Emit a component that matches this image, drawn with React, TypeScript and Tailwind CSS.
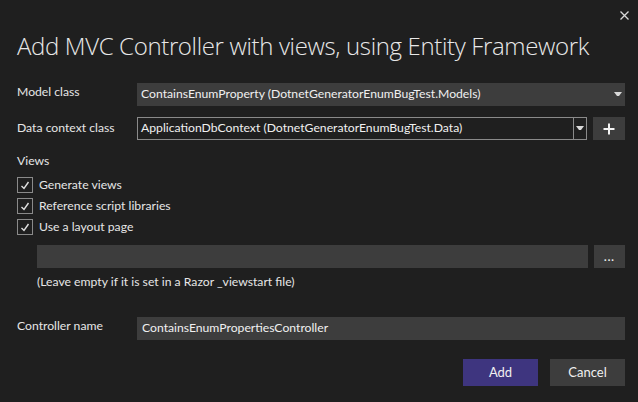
import React from "react";

const font = { fontFamily: 'Lato, "Open Sans", sans-serif' };
const titleFont = { fontFamily: '"Open Sans", "Noto Sans", sans-serif' };

function Arrow() {
  return (
    <svg width="8" height="5" viewBox="0 0 8 5" className="block">
      <polygon points="0,0 8,0 5,4 3,4" fill="#d8d8d8" />
    </svg>
  );
}

function Check({ label }: { label: string }) {
  return (
    <div className="flex items-center h-[16px] mb-[5px]">
      <div className="w-[16px] h-[16px] border border-[#8a8a8a] flex items-center justify-center">
        <svg width="10" height="9" viewBox="0 0 10 9">
          <polyline points="1.5,5 4,7.5 8.5,1" fill="none" stroke="#e0e0e0" strokeWidth="1.4" />
        </svg>
      </div>
      <span className="ml-[6px] text-[12.2px] text-[#e6e6e6] leading-none">{label}</span>
    </div>
  );
}

export default function App() {
  return (
    <div className="w-[638px] h-[402px] bg-[#1f1f1f] overflow-hidden flex flex-col pl-[17px] pr-[13px]" style={font}>
      <div className="h-[30px] flex justify-end items-center">
        <svg width="9" height="9" viewBox="0 0 9 9" className="mr-[-4px]">
          <path d="M0.5 0.5 L8.5 8.5 M8.5 0.5 L0.5 8.5" stroke="#d8d8d8" strokeWidth="1.3" />
        </svg>
      </div>
      <div className="h-[32px] flex items-center text-[24px] font-light text-[#e8e8e8] leading-none tracking-[-0.35px]" style={titleFont}>
        Add MVC Controller with views, using Entity Framework
      </div>
      <div className="mt-[21px] flex items-center h-[23px]">
        <div className="w-[120px] text-[12.2px] text-[#e6e6e6] mt-[-5px]">Model class</div>
        <div className="flex-1 h-[23px] bg-[#3d3d3d] flex items-center pl-[4px] pr-[3px]">
          <span className="flex-1 text-[12.2px] text-[#f0f0f0] leading-none">ContainsEnumProperty (DotnetGeneratorEnumBugTest.Models)</span>
          <Arrow />
        </div>
      </div>
      <div className="mt-[11px] flex items-center h-[23px]">
        <div className="w-[120px] text-[12.2px] text-[#e6e6e6]">Data context class</div>
        <div className="flex-1 h-[23px] border border-[#8a8a8a] flex items-stretch">
          <span className="flex-1 flex items-center pl-[3px] text-[12.2px] text-[#f0f0f0] leading-none">ApplicationDbContext (DotnetGeneratorEnumBugTest.Data)</span>
          <div className="w-[13px] border-l border-[#8a8a8a] flex items-center justify-center">
            <Arrow />
          </div>
        </div>
        <div className="ml-[6px] w-[32px] h-[23px] bg-[#3d3d3d] flex items-center justify-center">
          <svg width="12" height="12" viewBox="0 0 12 12">
            <path d="M6 0.5 V11.5 M0.5 6 H11.5" stroke="#f4f4f4" strokeWidth="2" />
          </svg>
        </div>
      </div>
      <div className="mt-[15px] h-[12px] text-[12.2px] text-[#e6e6e6] leading-none">Views</div>
      <div className="mt-[10px] flex flex-col">
        <Check label="Generate views" />
        <Check label="Reference script libraries" />
        <Check label="Use a layout page" />
      </div>
      <div className="mt-[5px] ml-[20px] flex h-[23px]">
        <div className="flex-1 bg-[#3d3d3d]" />
        <div className="ml-[6px] w-[31px] bg-[#3d3d3d] flex items-end justify-center pb-[6px]">
          <span className="text-[11px] text-[#f0f0f0] leading-none font-bold tracking-[1px]">...</span>
        </div>
      </div>
      <div className="mt-[8px] h-[12px] ml-[20px] text-[12.2px] text-[#e6e6e6] leading-none">(Leave empty if it is set in a Razor _viewstart file)</div>
      <div className="mt-[29px] flex items-center h-[23px]">
        <div className="w-[120px] text-[12.2px] text-[#e6e6e6] mt-[-5px]">Controller name</div>
        <div className="flex-1 h-[23px] bg-[#3d3d3d] flex items-center pl-[5px]">
          <span className="text-[12.2px] text-[#f0f0f0] leading-none">ContainsEnumPropertiesController</span>
        </div>
      </div>
      <div className="mt-[19px] flex justify-end">
        <div className="w-[75px] h-[27px] bg-[#3e357f] flex items-center justify-center text-[13px] text-[#f0f0f0]">Add</div>
        <div className="ml-[12px] w-[75px] h-[27px] bg-[#3d3d3d] flex items-center justify-center text-[13px] text-[#f0f0f0]">Cancel</div>
      </div>
    </div>
  );
}
